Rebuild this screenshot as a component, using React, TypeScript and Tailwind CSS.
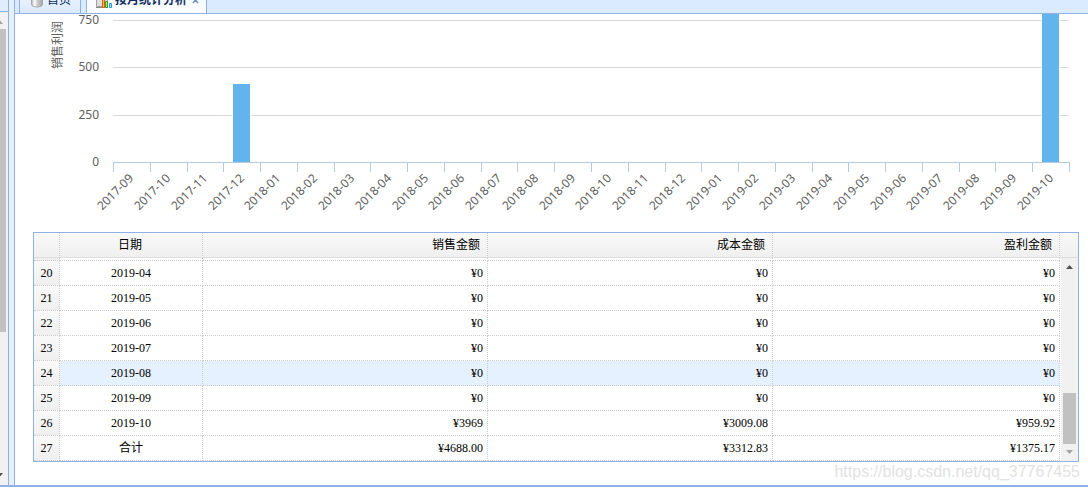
import { clsx } from "clsx";

const FIRST_YEAR = 2017;
const FIRST_MONTH = 9;
const MONTH_COUNT = 26;

// plot area inside the chart's viewBox
const PLOT = { left: 98, right: 1054, base: 148 };
const STEP = (PLOT.right - PLOT.left) / MONTH_COUNT;

const months = Array.from({ length: MONTH_COUNT }, (_, i) => {
    const n = FIRST_MONTH - 1 + i;
    return `${FIRST_YEAR + Math.floor(n / 12)}-${String((n % 12) + 1).padStart(2, "0")}`;
});

const yTicks = [
    { value: 750, y: 6 },
    { value: 500, y: 53 },
    { value: 250, y: 101 },
    { value: 0, y: 148 },
];

// only the months that have any profit
const bars = [
    { month: "2017-12", top: 70 },
    { month: "2019-10", top: -10 },
];

const rows = [
    { no: 20, date: "2019-04", sales: "¥0", cost: "¥0", profit: "¥0" },
    { no: 21, date: "2019-05", sales: "¥0", cost: "¥0", profit: "¥0" },
    { no: 22, date: "2019-06", sales: "¥0", cost: "¥0", profit: "¥0" },
    { no: 23, date: "2019-07", sales: "¥0", cost: "¥0", profit: "¥0" },
    { no: 24, date: "2019-08", sales: "¥0", cost: "¥0", profit: "¥0", hover: true },
    { no: 25, date: "2019-09", sales: "¥0", cost: "¥0", profit: "¥0" },
    { no: 26, date: "2019-10", sales: "¥3969", cost: "¥3009.08", profit: "¥959.92" },
    { no: 27, date: "合计", sales: "¥4688.00", cost: "¥3312.83", profit: "¥1375.17" },
];

const cell = "border-r border-b border-dotted border-[#ccc] p-0";

function DatabaseIcon() {
    return (
        <svg width="16" height="16" viewBox="0 0 16 16" aria-hidden="true">
            <defs>
                <linearGradient id="cylinder">
                    <stop offset="0" stopColor="#b4b4b4" />
                    <stop offset="0.3" stopColor="#ffffff" />
                    <stop offset="0.5" stopColor="#d0d0d0" />
                    <stop offset="1" stopColor="#a4a4a4" />
                </linearGradient>
            </defs>
            <path d="M2.5 3v9.500c0 1.400 2.500 2.500 5.500 2.500s5.500-1.100 5.500-2.500V3z" fill="url(#cylinder)" stroke="#a8a8a8" />
            <ellipse cx="8" cy="3" rx="5.500" ry="2.500" fill="#eee" stroke="#a8a8a8" />
        </svg>
    );
}

function ChartIcon() {
    return (
        <svg width="16" height="16" viewBox="0 0 16 16" aria-hidden="true">
            <path d="M0.500 0.500h11v14h-11z" fill="#dedede" stroke="#a0a0a0" />
            <path d="M0 15.500h12" stroke="#8a8a8a" />
            <path d="M6.500 7.500h2v8h-2z" fill="#ffc04a" stroke="#e4571e" />
            <path d="M9.500 9.500h2v6h-2z" fill="#a6ec5a" stroke="#2fa822" />
            <path d="M13.500 11.500h2v4h-2z" fill="#8fdcfa" stroke="#2a9fd8" />
        </svg>
    );
}

function Arrow({ down = false, className }: { down?: boolean; className: string }) {
    return (
        <svg width="7" height="4" viewBox="0 0 7 4" className={className} aria-hidden="true">
            <path d={down ? "M0 0h7L3.500 4z" : "M0 4h7L3.500 0z"} fill="currentColor" />
        </svg>
    );
}

function SideBar() {
    return (
        <aside className="flex w-[9px] shrink-0 flex-col overflow-hidden border-r border-[#8db2e3]">
            <div className="h-3 border-b border-[#8db2e3] bg-[#e0ecff]" />
            <div className="flex flex-1 flex-col bg-[#f1f1f1] pt-2 pb-2">
                <Arrow className="-ml-1 text-[#a3a3a3]" />
                <div className="mt-[5px] h-[303px] w-[6px] bg-[#c1c1c1]" />
                <Arrow down className="mt-auto -ml-1 text-[#505050]" />
            </div>
        </aside>
    );
}

function TabBar() {
    return (
        <nav className="flex h-[14px] items-end gap-[5px] overflow-hidden border-b border-[#8db2e3] bg-[#daebff] pl-1 text-xs text-[#0e2d5f]">
            <button className="flex h-[26px] shrink-0 items-center gap-px border-x border-[#8db2e3] bg-linear-to-b from-[#eff5ff] to-[#dceaff] pr-[9px] pl-[9px]">
                <DatabaseIcon />
                <span className="pl-px">首页</span>
            </button>
            <div className="flex h-[26px] shrink-0 items-center border-x border-[#8db2e3] bg-linear-to-b from-[#eff5ff] to-white pr-[7px] pl-[9px]">
                <button className="flex items-center gap-[3px] font-bold">
                    <ChartIcon />
                    <span>按月统计分析</span>
                </button>
                <button aria-label="关闭" className="ml-[5px]">
                    <svg width="7" height="8" viewBox="0 0 7 8" aria-hidden="true">
                        <path d="M1 1l5 6M6 1l-5 6" stroke="#6b95c9" strokeWidth="1.500" />
                    </svg>
                </button>
            </div>
        </nav>
    );
}

function ProfitChart() {
    return (
        <svg viewBox="0 0 1073 218" className="block h-auto w-full" role="img" aria-label="销售利润">
            <g shapeRendering="crispEdges">
                {yTicks.slice(0, 3).map((t) => (
                    <rect key={t.value} x={PLOT.left} y={t.y} width={PLOT.right - PLOT.left} height="1" fill="#d8d8d8" />
                ))}
                {bars.map((b) => (
                    <rect
                        key={b.month}
                        x={Math.ceil(PLOT.left + (months.indexOf(b.month) + 0.5) * STEP - 9)}
                        y={b.top}
                        width="17"
                        height={PLOT.base - b.top}
                        fill="#63b4ec"
                        stroke="#fff"
                        strokeWidth="2"
                        paintOrder="stroke"
                    />
                ))}
                <rect x={PLOT.left} y={PLOT.base} width={PLOT.right - PLOT.left + 1} height="1" fill="#b5cce0" />
                {Array.from({ length: MONTH_COUNT + 1 }, (_, i) => (
                    <rect key={i} x={Math.round(PLOT.left + i * STEP)} y={PLOT.base} width="1" height="10" fill="#b5cce0" />
                ))}
            </g>
            <g fill="#606060" className="font-['Noto_Sans','Noto_Sans_CJK_SC',sans-serif] text-xs">
                <text transform="translate(47 31) rotate(-90)" textAnchor="middle">
                    销售利润
                </text>
                {yTicks.map((t) => (
                    <text key={t.value} x="84" y={t.y + 4} textAnchor="end">
                        {t.value}
                    </text>
                ))}
                {months.map((m, i) => (
                    <text
                        key={m}
                        transform={`translate(${Math.round(PLOT.left + (i + 0.5) * STEP + 3)} 165) rotate(-45)`}
                        textAnchor="end"
                    >
                        {m}
                    </text>
                ))}
            </g>
        </svg>
    );
}

function ReportGrid() {
    return (
        <div className="mr-[9px] ml-[18px] flex border border-[#8db2e3]">
            <table className="min-w-0 flex-1 table-fixed border-separate border-spacing-0 text-xs text-black">
                <colgroup>
                    <col className="w-[26px]" />
                    <col className="w-[143px]" />
                    <col className="w-[285px]" />
                    <col className="w-[285px]" />
                    <col />
                </colgroup>
                <thead>
                    <tr className="h-[25px] bg-linear-to-b from-[#f9f9f9] to-[#efefef] *:border-r *:border-b *:border-[#ddd] *:border-r-[#ccc] *:[border-right-style:dotted] *:p-0 *:font-normal">
                        <th aria-label="序号" />
                        <th className="pr-[2px]! text-center">日期</th>
                        <th className="text-right">
                            <span className="pr-[7px]">销售金额</span>
                        </th>
                        <th className="text-right">
                            <span className="pr-[7px]">成本金额</span>
                        </th>
                        <th className="text-right">
                            <span className="pr-[7px]">盈利金额</span>
                        </th>
                    </tr>
                </thead>
                <tbody>
                    {/* tail of the row scrolled under the header */}
                    <tr className="h-[3px]" aria-hidden="true">
                        <td className={clsx(cell, "bg-[#efefef]")} />
                        <td className={cell} />
                        <td className={cell} />
                        <td className={cell} />
                        <td className={cell} />
                    </tr>
                    {rows.map((r) => (
                        <tr key={r.no} className={clsx("h-[25px]", r.hover && "bg-[#e6f1ff]")}>
                            <td className={clsx(cell, "bg-linear-to-b from-[#f9f9f9] to-[#efefef] text-center")}>{r.no}</td>
                            <td className={clsx(cell, "text-center")}>{r.date}</td>
                            <td className={clsx(cell, "text-right")}>
                                <span className="pr-1">{r.sales}</span>
                            </td>
                            <td className={clsx(cell, "text-right")}>
                                <span className="pr-1">{r.cost}</span>
                            </td>
                            <td className={clsx(cell, "text-right")}>
                                <span className="pr-1">{r.profit}</span>
                            </td>
                        </tr>
                    ))}
                </tbody>
            </table>
            <div className="flex w-[18px] flex-col">
                <div className="h-[25px] border-b border-[#ddd] bg-linear-to-b from-[#f9f9f9] to-[#efefef]" />
                <div className="ml-px flex flex-1 flex-col items-center bg-[#f1f1f1] py-[7px]">
                    <Arrow className="text-[#505050]" />
                    <div className="mt-auto h-[51px] w-[13px] bg-[#c1c1c1]" />
                    <Arrow down className="mt-[6px] text-[#a3a3a3]" />
                </div>
            </div>
        </div>
    );
}

export default function App() {
    return (
        <div className="min-h-screen bg-white pb-[2px] font-['Liberation_Serif','Noto_Sans_CJK_SC',serif]">
            <div className="flex min-h-[calc(100vh-2px)] border-b-2 border-[#8db2e3] bg-[#e6f0fb]">
                <SideBar />
                <main className="ml-[5px] min-w-0 flex-1 border-l border-[#8db2e3] bg-white">
                    <TabBar />
                    <ProfitChart />
                    <ReportGrid />
                    <p className="pr-2 text-right font-['Liberation_Sans',sans-serif] text-base leading-5 text-[#e2e2e2]">
                        https://blog.csdn.net/qq_37767455
                    </p>
                </main>
            </div>
        </div>
    );
}
